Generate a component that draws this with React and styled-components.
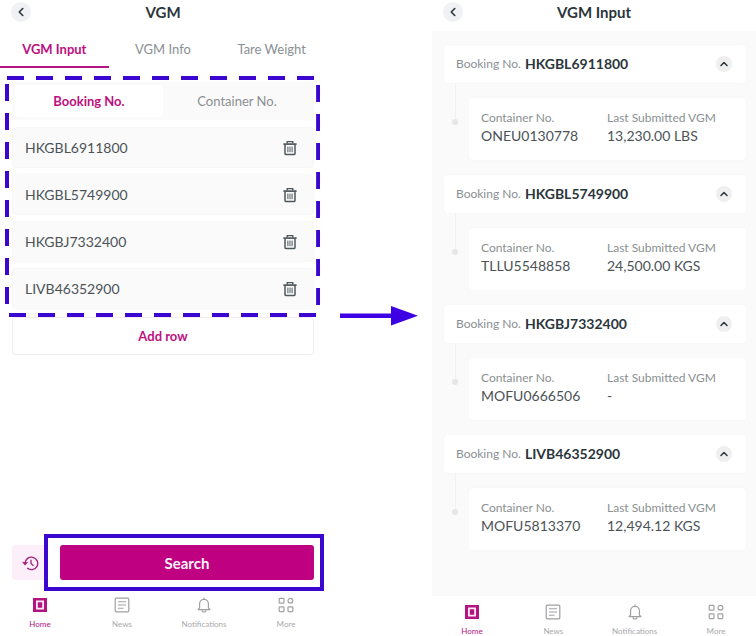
import styled, { createGlobalStyle } from "styled-components";
import { ChevronLeft, ChevronUp } from "lucide-react";

const theme = {
   magenta: "#BD0F7D",
   search: "#BF0080",
   blue: "#3A06D0",
   dark: "#2B363B",
   text: "#4C5357",
   label: "#8A8F93",
   muted: "#A9A9AC",
   panel: "#FAFAFA",
};

const ROWS = ["HKGBL6911800", "HKGBL5749900", "HKGBJ7332400", "LIVB46352900"];

const BOOKINGS = [
   { no: "HKGBL6911800", container: "ONEU0130778", vgm: "13,230.00 LBS" },
   { no: "HKGBL5749900", container: "TLLU5548858", vgm: "24,500.00 KGS" },
   { no: "HKGBJ7332400", container: "MOFU0666506", vgm: "-" },
   { no: "LIVB46352900", container: "MOFU5813370", vgm: "12,494.12 KGS" },
];

function TrashIcon() {
   return (
      <svg width="14" height="16" viewBox="0 0 14 16" fill="none" stroke="#4D585E">
         <path d="M4.2 3.4V1.6h5.6v1.8" strokeWidth="1.4" />
         <path d="M0.4 4.1h13.2" strokeWidth="1.7" />
         <path d="M2 4.6v8.8q0 1.2 1.2 1.2h7.6q1.2 0 1.2-1.2V4.6" strokeWidth="1.5" />
         <path d="M4.9 6.6v5.6M7 6.6v5.6M9.1 6.6v5.6" strokeWidth="1" />
      </svg>
   );
}

function HistoryIcon() {
   return (
      <svg width="17" height="16" viewBox="0 0 17 16" fill="none" stroke="#A5217C" strokeWidth="1.3">
         <path d="M3.1 8.3a6.3 6.3 0 1 1 2.1 4.8" />
         <path d="M0.6 7.3h5L3.1 10.2z" fill="#A5217C" strokeWidth="0.6" />
         <path d="M9 4.8v3.6l2.5 2.3" />
      </svg>
   );
}

function HomeIcon() {
   return (
      <svg width="16" height="16" viewBox="0 0 16 16">
         <path d="M1 1h14v14H1z" fill="#B31480" />
         <path d="M4.9 4.4h6.2v7.2H4.9z" fill="#B31480" stroke="#FFEAF8" strokeWidth="1.8" />
      </svg>
   );
}

function NewsIcon() {
   return (
      <svg width="16" height="16" viewBox="0 0 16 16" fill="none" stroke="#A0A0A3">
         <rect x="1.2" y="1.2" width="13.6" height="13.6" rx="1" strokeWidth="1.2" />
         <path d="M4 4.8h8M4 8h8M4 11.2h5.5" strokeWidth="1.1" />
      </svg>
   );
}

function BellIcon() {
   return (
      <svg width="16" height="16" viewBox="0 0 16 16" fill="none" stroke="#A0A0A3" strokeWidth="1.2">
         <path d="M8 0.6v1.6M3.6 11V6.7a4.4 4.4 0 0 1 8.8 0V11l1.6 1.6H2z" strokeLinejoin="round" />
         <path d="M6 13.2a2 1.8 0 0 0 4 0" />
      </svg>
   );
}

function MoreIcon() {
   return (
      <svg width="16" height="16" viewBox="0 0 16 16" fill="none" stroke="#A0A0A3" strokeWidth="1.2">
         <rect x="1.2" y="1.4" width="4.8" height="4.8" rx="0.8" />
         <circle cx="12.4" cy="3.8" r="2.4" />
         <rect x="1.2" y="9.8" width="4.8" height="4.8" rx="0.8" />
         <rect x="10" y="9.8" width="4.8" height="4.8" rx="0.8" />
      </svg>
   );
}

function Header({ title }) {
   return (
      <TopBar>
         <BackButton type="button" aria-label="Back">
            <ChevronLeft size={14} strokeWidth={2.8} />
         </BackButton>
         <Title>{title}</Title>
      </TopBar>
   );
}

function BottomNav({ $top, $bottom }) {
   return (
      <Nav $top={$top} $bottom={$bottom}>
         <NavLink href="#home" $active><HomeIcon />Home</NavLink>
         <NavLink href="#news"><NewsIcon />News</NavLink>
         <NavLink href="#notifications"><BellIcon />Notifications</NavLink>
         <NavLink href="#more"><MoreIcon />More</NavLink>
      </Nav>
   );
}

function DashedFrame() {
   return (
      <Dashes aria-hidden="true">
         <line x1="2" y1="2" x2="100%" y2="2" />
         <line x1="2" y1="8" x2="2" y2="97%" />
         <line x1="99.4%" y1="9" x2="99.4%" y2="97%" />
         <line x1="4" y1="99.2%" x2="100%" y2="99.2%" />
      </Dashes>
   );
}

function Booking({ no, container, vgm }) {
   return (
      <section>
         <BookingCard>
            <Caption>Booking No.</Caption>
            <BookingNo>{no}</BookingNo>
            <ToggleButton type="button" aria-label={`Collapse ${no}`}>
               <ChevronUp size={12} strokeWidth={3} />
            </ToggleButton>
         </BookingCard>
         <Branch>
            <Rail><Line /><Dot /></Rail>
            <Detail>
               <div>
                  <Caption as="dt">Container No.</Caption>
                  <Value>{container}</Value>
               </div>
               <div>
                  <Caption as="dt">Last Submitted VGM</Caption>
                  <Value>{vgm}</Value>
               </div>
            </Detail>
         </Branch>
      </section>
   );
}

export default function App() {
   return (
      <>
         <GlobalStyle />
         <Page>
            <Screen>
               <Header title="VGM" />
               <Tabs role="tablist">
                  <Tab type="button" role="tab" aria-selected="true" $active>VGM Input</Tab>
                  <Tab type="button" role="tab" aria-selected="false">VGM Info</Tab>
                  <Tab type="button" role="tab" aria-selected="false">Tare Weight</Tab>
               </Tabs>
               <Form>
                  <DashedFrame />
                  <Segments>
                     <Segment type="button" $active>Booking No.</Segment>
                     <Segment type="button">Container No.</Segment>
                  </Segments>
                  <Rows>
                     {ROWS.map((no) => (
                        <Row key={no}>
                           <RowInput aria-label="Booking No." defaultValue={no} />
                           <IconButton type="button" aria-label={`Delete ${no}`}>
                              <TrashIcon />
                           </IconButton>
                        </Row>
                     ))}
                  </Rows>
               </Form>
               <AddArea>
                  <AddButton type="button">Add row</AddButton>
               </AddArea>
               <Actions>
                  <HistoryButton type="button" aria-label="History">
                     <HistoryIcon />
                  </HistoryButton>
                  <SearchArea>
                     <SearchButton type="button">Search</SearchButton>
                     <SearchFrame />
                  </SearchArea>
               </Actions>
               <BottomNav $top={17} $bottom={7} />
            </Screen>

            <Between>
               <svg width="78" height="20" viewBox="0 0 78 20" fill="#3D00E4" aria-hidden="true">
                  <path d="M0 7.6h51V0l27 9.7L51 19.4V12H0z" />
               </svg>
            </Between>

            <Screen>
               <Header title="VGM Input" />
               <Results>
                  {BOOKINGS.map((item) => (
                     <Booking key={item.no} {...item} />
                  ))}
               </Results>
               <BottomNav $top={8} $bottom={0} />
            </Screen>
         </Page>
      </>
   );
}

const GlobalStyle = createGlobalStyle`
   *, *::before, *::after {
      box-sizing: border-box;
   }
   body {
      margin: 0;
      background: #fff;
      font-family: "Lato", "Open Sans", sans-serif;
      color: ${theme.text};
   }
   button, input {
      font: inherit;
      color: inherit;
      border: 0;
      padding: 0;
      margin: 0;
      background: none;
   }
   svg {
      flex: none;
      display: block;
   }
   h1, dl, dd {
      margin: 0;
   }
`

const Page = styled.main`
   display: grid;
   grid-template-columns: 326fr 106px 324fr;
   min-height: 100vh;
`

const Screen = styled.section`
   display: flex;
   flex-direction: column;
   min-width: 0;
`

const TopBar = styled.header`
   display: grid;
   grid-template-columns: 20px 1fr 20px;
   align-items: center;
   height: 31px;
   padding: 0 11px 8px;
`

const BackButton = styled.button`
   display: grid;
   place-items: center;
   width: 20px;
   height: 20px;
   border-radius: 50%;
   background: #F0F1F4;
   color: ${theme.dark};
`

const Title = styled.h1`
   font-size: 15px;
   line-height: 20px;
   font-weight: 700;
   text-align: center;
   color: ${theme.dark};
`

const Tabs = styled.div`
   display: grid;
   grid-template-columns: repeat(3, 1fr);
`

const Tab = styled.button`
   height: 37px;
   font-size: 13px;
   font-weight: ${({ $active }) => ($active ? 700 : 400)};
   color: ${({ $active }) => ($active ? theme.magenta : theme.label)};
   border-bottom: 2px solid ${({ $active }) => ($active ? "#B51482" : "transparent")};
`

const Form = styled.div`
   position: relative;
   padding: 14px 12px 8px;
`

const Dashes = styled.svg`
   position: absolute;
   top: 8px;
   left: 5px;
   width: calc(100% - 11px);
   height: 241px;
   pointer-events: none;
   stroke: ${theme.blue};
   stroke-width: 4;
   stroke-dasharray: 17 12;
   z-index: 1;
`

const Segments = styled.div`
   display: grid;
   grid-template-columns: 1fr 1fr;
   padding: 3px;
   background: ${theme.panel};
`

const Segment = styled.button`
   height: 32px;
   border-radius: 4px;
   font-size: 13px;
   font-weight: ${({ $active }) => ($active ? 700 : 400)};
   color: ${({ $active }) => ($active ? theme.magenta : theme.label)};
   background: ${({ $active }) => ($active ? "#fff" : "transparent")};
`

const Rows = styled.div`
   display: flex;
   flex-direction: column;
   gap: 6px;
   padding-top: 7px;
`

const Row = styled.div`
   display: flex;
   align-items: center;
   height: 41px;
   padding: 0 16px 0 12px;
   background: ${theme.panel};
   border: 1px solid #F7F7F8;
   border-radius: 4px;
`

const RowInput = styled.input`
   flex: 1;
   min-width: 0;
   font-size: 14px;
   line-height: 20px;
`

const IconButton = styled.button`
   display: flex;
`

const AddArea = styled.div`
   padding: 0 12px;
`

const AddButton = styled.button`
   width: 100%;
   height: 38px;
   border: 1px solid #F4E9F1;
   border-radius: 4px;
   font-size: 13px;
   font-weight: 700;
   color: ${theme.magenta};
`

const Actions = styled.div`
   display: flex;
   gap: 12px;
   margin-top: auto;
   padding: 0 12px;
`

const HistoryButton = styled.button`
   display: grid;
   place-items: center;
   width: 36px;
   height: 35px;
   border-radius: 4px;
   background: #FDEFFA;
`

const SearchArea = styled.div`
   position: relative;
   flex: 1;
`

const SearchButton = styled.button`
   width: 100%;
   height: 35px;
   border-radius: 3px;
   font-size: 15px;
   font-weight: 700;
   color: #FFF4FC;
   background: ${theme.search};
`

const SearchFrame = styled.div`
   position: absolute;
   inset: -11px -10px -11px -16px;
   border: 4px solid ${theme.blue};
   pointer-events: none;
`

const Nav = styled.nav`
   display: flex;
   justify-content: space-between;
   padding: ${({ $top, $bottom }) => `${$top}px 8px ${$bottom}px`};
`

const NavLink = styled.a`
   display: flex;
   flex-direction: column;
   align-items: center;
   gap: 6px;
   width: 64px;
   font-size: 8px;
   line-height: 10px;
   text-decoration: none;
   color: ${({ $active }) => ($active ? "#B31480" : theme.muted)};
`

const Between = styled.div`
   display: flex;
   justify-content: center;
   align-items: flex-start;
   padding-top: 306px;
`

const Results = styled.div`
   flex: 1;
   display: flex;
   flex-direction: column;
   gap: 15px;
   padding: 14px 10px 0 12px;
   background: ${theme.panel};
`

const BookingCard = styled.div`
   display: flex;
   align-items: center;
   gap: 4px;
   height: 38px;
   padding: 0 14px 0 12px;
   border-radius: 4px;
   background: #fff;
   box-shadow: 0 0 2px rgba(0, 0, 0, 0.04);
`

const Caption = styled.span`
   font-size: 12px;
   line-height: 16px;
   color: ${theme.label};
`

const BookingNo = styled.strong`
   flex: 1;
   font-size: 14px;
   line-height: 20px;
   font-weight: 700;
   color: ${theme.dark};
`

const ToggleButton = styled.button`
   display: grid;
   place-items: center;
   width: 16px;
   height: 16px;
   border-radius: 50%;
   background: #EFEFF0;
   color: ${theme.dark};
`

const Branch = styled.div`
   display: flex;
`

const Rail = styled.div`
   display: flex;
   flex-direction: column;
   align-items: center;
   width: 25px;
   padding-right: 3px;
`

const Line = styled.div`
   width: 1px;
   height: 36px;
   background: #F1F1F1;
`

const Dot = styled.div`
   width: 6px;
   height: 6px;
   border-radius: 50%;
   background: #E6E6E8;
`

const Detail = styled.dl`
   flex: 1;
   display: grid;
   grid-template-columns: 126px 1fr;
   height: 62px;
   margin-top: 15px;
   padding: 12px 0 0 12px;
   border-radius: 4px;
   background: #fff;
   box-shadow: 0 0 2px rgba(0, 0, 0, 0.04);
`

const Value = styled.dd`
   font-size: 14px;
   line-height: 20px;
   color: ${theme.text};
`
